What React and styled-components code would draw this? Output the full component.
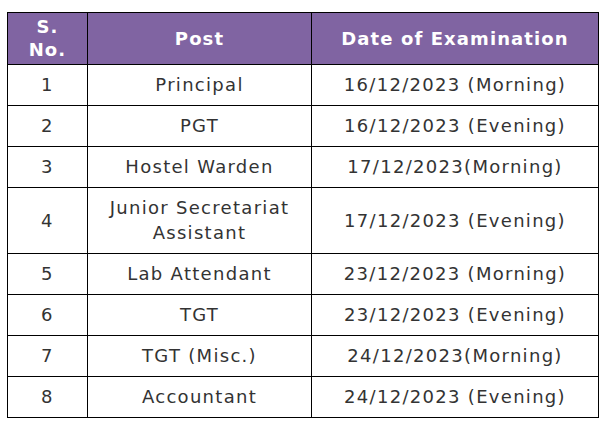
import styled, { createGlobalStyle } from "styled-components";

const GlobalStyle = createGlobalStyle`
  body {
    margin: 0;
    background: #ffffff;
    font-family: "DejaVu Sans", Verdana, sans-serif;
  }
`;

const Wrapper = styled.div`
  padding: 12px 0 0 7px;
`;

const Table = styled.table`
  border-collapse: collapse;
  table-layout: fixed;
  width: 591px;
  font-size: 18px;
  color: #333333;
`;

const HeadCell = styled.th`
  background: #8064a2;
  color: #ffffff;
  font-weight: bold;
  letter-spacing: 1.1px;
  border: 1px solid #000000;
  padding: 2px 4px 3px;
  line-height: 23px;
  text-align: center;
  vertical-align: middle;
`;

const Cell = styled.td`
  border: 1px solid #000000;
  padding: 7px 4px 8px;
  line-height: 25px;
  letter-spacing: 1.3px;
  text-align: center;
  vertical-align: middle;
`;

const rows = [
  ["1", "Principal", "16/12/2023 (Morning)"],
  ["2", "PGT", "16/12/2023 (Evening)"],
  ["3", "Hostel Warden", "17/12/2023(Morning)"],
  ["4", "Junior Secretariat Assistant", "17/12/2023 (Evening)"],
  ["5", "Lab Attendant", "23/12/2023 (Morning)"],
  ["6", "TGT", "23/12/2023 (Evening)"],
  ["7", "TGT (Misc.)", "24/12/2023(Morning)"],
  ["8", "Accountant", "24/12/2023 (Evening)"],
];

export default function App() {
  return (
    <>
      <GlobalStyle />
      <Wrapper>
        <Table>
          <colgroup>
            <col style={{ width: 80 }} />
            <col style={{ width: 224 }} />
            <col style={{ width: 287 }} />
          </colgroup>
          <thead>
            <tr>
              <HeadCell>S.<br />No.</HeadCell>
              <HeadCell>Post</HeadCell>
              <HeadCell>Date of Examination</HeadCell>
            </tr>
          </thead>
          <tbody>
            {rows.map(([no, post, date]) => (
              <tr key={no}>
                <Cell>{no}</Cell>
                <Cell>{post}</Cell>
                <Cell>{date}</Cell>
              </tr>
            ))}
          </tbody>
        </Table>
      </Wrapper>
    </>
  );
}
